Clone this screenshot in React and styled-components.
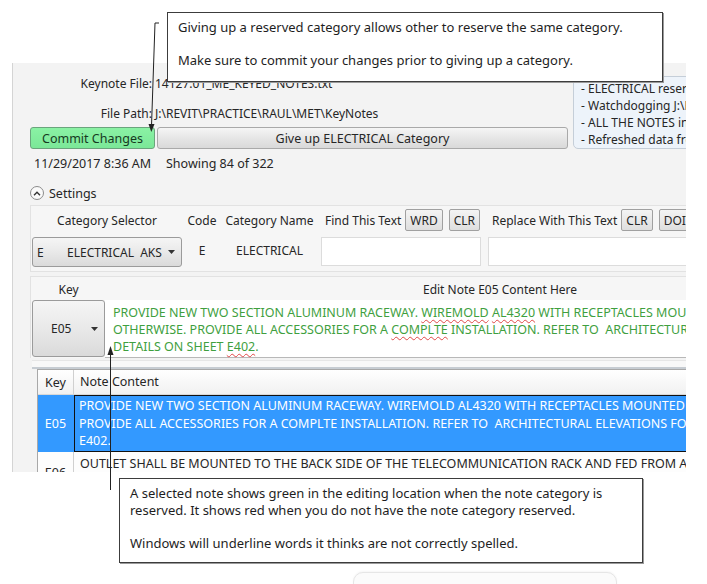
import React from 'react';
import styled, { createGlobalStyle } from 'styled-components';

const GlobalStyle = createGlobalStyle`
  html, body { margin: 0; padding: 0; background: #fff; }
  body { font-family: 'Noto Sans', 'Open Sans', sans-serif; }
`;

const Page = styled.div`
  position: relative;
  width: 707px;
  height: 584px;
  overflow: hidden;
  background: #fff;
  padding-top: 63px;
  box-sizing: border-box;
`;

const AppWindow = styled.div`
  margin-left: 12px;
  width: 674px;
  height: 409px;
  overflow: hidden;
  background: #f3f3f3;
  border-left: 1px solid #d4d4d4;
  box-sizing: border-box;
`;

const AppInner = styled.div`
  width: 900px;
  padding-left: 17px;
  font-size: 12px;
  color: #262626;
  box-sizing: border-box;
`;

const TopSection = styled.div`
  display: flex;
  align-items: flex-end;
  gap: 5px;
  padding-top: 9px;
`;

const LeftCol = styled.div`
  width: 538px;
  display: flex;
  flex-direction: column;
`;

const FieldRow = styled.div`
  display: flex;
  align-items: center;
  height: 22px;
  margin-bottom: ${(p) => (p.$tight ? 3 : 8)}px;
`;

const FieldLabel = styled.span`
  width: 122px;
  text-align: right;
`;

const FieldValue = styled.span`
  padding-left: 3px;
  white-space: nowrap;
`;

const ButtonRow = styled.div`
  display: flex;
  gap: 2px;
  height: 22px;
`;

const WideButton = styled.div`
  width: ${(p) => p.$width}px;
  height: 22px;
  box-sizing: border-box;
  display: flex;
  align-items: center;
  justify-content: center;
  border-radius: 3px;
  border: 1px solid ${(p) => (p.$commit ? '#6aa57c' : '#a9a9a9')};
  background: ${(p) =>
    p.$commit
      ? 'linear-gradient(#8af2a4, #7be898)'
      : 'linear-gradient(#f5f5f5, #e6e6e6 50%, #d9d9d9)'};
  color: ${(p) => (p.$commit ? '#163a1f' : '#262626')};
  font-size: 12.5px;
`;

const InfoBox = styled.div`
  width: 160px;
  height: 73px;
  box-sizing: border-box;
  padding: 3px 7px;
  background: #edf3fa;
  border: 1px solid #c5ced8;
  border-radius: 5px;
  line-height: 17px;
  white-space: nowrap;
  overflow: hidden;
`;

const StatusRow = styled.div`
  display: flex;
  align-items: center;
  height: 20px;
  margin-top: 4px;
  padding-left: 4px;
  font-size: 12.5px;
`;

const StatusTime = styled.span`
  width: 132px;
`;

const SettingsToggle = styled.div`
  display: flex;
  align-items: center;
  gap: 5px;
  height: 18px;
  margin-top: 11px;
  font-size: 12.5px;
`;

const ToggleCircle = styled.span`
  width: 14px;
  height: 14px;
  box-sizing: border-box;
  border-radius: 50%;
  border: 1px solid #8c8c8c;
  background: #fafafa;
  display: flex;
  align-items: center;
  justify-content: center;
`;

const SettingsPanel = styled.div`
  margin-top: 3px;
  border: 1px solid #e2e2e2;
  border-right: none;
  background: #f6f6f6;
  padding: 3px 0 4px 1px;
  display: grid;
  grid-template-columns: 150px 32px 95px 163px 300px;
  grid-template-rows: 22px 30px;
  column-gap: 4px;
  row-gap: 6px;
`;

const HeadCell = styled.div`
  display: flex;
  align-items: center;
  justify-content: ${(p) => (p.$start ? 'flex-start' : 'center')};
  gap: 4px;
  padding-left: ${(p) => p.$indent || 0}px;
  white-space: nowrap;
`;

const SmallButton = styled.span`
  height: 22px;
  box-sizing: border-box;
  padding: 0 4px;
  display: flex;
  align-items: center;
  border: 1px solid #a0a0a0;
  border-radius: 2px;
  background: linear-gradient(#f4f4f4, #dedede);
  margin-left: ${(p) => p.$push || 0}px;
`;

const ComboBox = styled.div`
  display: flex;
  align-items: center;
  box-sizing: border-box;
  height: ${(p) => p.$height || 30}px;
  border: 1px solid #9b9b9b;
  border-radius: 3px;
  background: linear-gradient(#f5f5f5, #e9e9e9 50%, #dadada);
  padding: ${(p) => p.$pad || '0 6px 0 4px'};
`;

const ComboCode = styled.span`
  width: 30px;
`;

const ComboText = styled.span`
  flex: 1;
  white-space: pre;
`;

const ValueCell = styled.div`
  display: flex;
  align-items: center;
  justify-content: center;
  padding-bottom: 3px;
`;

const TextInput = styled.div`
  height: 29px;
  width: ${(p) => p.$width}px;
  box-sizing: border-box;
  background: #fff;
  border: 1px solid #dcdcdc;
`;

const EditSection = styled.div`
  margin-top: 4px;
  border: 1px solid #e2e2e2;
  border-right: none;
  border-bottom: none;
  background: #f6f6f6;
  padding: 3px 0 0 1px;
  display: grid;
  grid-template-columns: 73px 790px;
  grid-template-rows: 18px 58px;
  row-gap: 2px;
`;

const EditorBox = styled.div`
  background: #fff;
  color: #3f9f3f;
  padding: 4px 8px;
  line-height: 17px;
  font-size: 12.5px;
  border-bottom: 1px solid #b8b8b8;
  box-sizing: border-box;
  white-space: pre;
`;

const Misspelled = styled.span`
  text-decoration: underline wavy #e04848;
  text-decoration-thickness: 1px;
  text-underline-offset: 2px;
`;

const Divider = styled.div`
  height: 6px;
  margin-left: 2px;
  border-top: 1px solid #e6e6e6;
  border-bottom: 2px solid #c6ccd2;
  margin-top: 2px;
  background: #f8f8f8;
`;

const Table = styled.div`
  margin-left: 7px;
  border: 1px solid #a8a8a8;
  background: #fdfdfd;
  font-size: 12.5px;
`;

const TableRow = styled.div`
  display: grid;
  grid-template-columns: 36px 1fr;
  height: ${(p) => p.$height}px;
  background: ${(p) => (p.$selected ? '#3399ff' : p.$header ? 'linear-gradient(#ffffff, #f1f1f1)' : 'transparent')};
  color: ${(p) => (p.$selected ? '#fff' : '#262626')};
  border-bottom: 1px solid ${(p) => (p.$header ? '#d8d8d8' : 'transparent')};
`;

const KeyCell = styled.div`
  display: flex;
  align-items: center;
  justify-content: center;
  padding-top: ${(p) => p.$pt || 0}px;
  border-right: 1px solid ${(p) => (p.$selected ? '#3399ff' : '#d0d0d0')};
  overflow: hidden;
`;

const NoteCell = styled.div`
  padding: ${(p) => p.$pad || '2px 5px'};
  line-height: 17.5px;
  white-space: pre;
  box-sizing: border-box;
  border: 1px solid ${(p) => (p.$focused ? '#111' : 'transparent')};
  display: ${(p) => (p.$header ? 'flex' : 'block')};
  align-items: center;
`;

const FigureEdge = styled.div`
  margin: 100px 0 0 353px;
  width: 262px;
  height: 30px;
  border: 1px solid #e6e6e6;
  border-radius: 10px;
  background: #fbfbfb;
  box-shadow: 0 -1px 2px rgba(0, 0, 0, 0.04);
`;

const Callout = styled.div`
  position: absolute;
  top: ${(p) => p.$top}px;
  left: ${(p) => p.$left}px;
  width: ${(p) => p.$width}px;
  box-sizing: border-box;
  padding: 6px 10px ${(p) => p.$pb}px;
  background: #fff;
  border: 1px solid #3c3c3c;
  box-shadow: 1px 1px 0 #9a9a9a;
  font-size: 13px;
  line-height: 16.5px;
  color: #1e1e1e;
  white-space: nowrap;
`;

const Leaders = styled.svg`
  position: absolute;
  top: 0;
  left: 0;
  pointer-events: none;
`;

const Caret = ({ color = '#333' }) => (
  <svg width="7" height="4" viewBox="0 0 7 4">
    <path d="M0 0 L7 0 L3.5 4 Z" fill={color} />
  </svg>
);

export default function App() {
  return (
    <>
      <GlobalStyle />
      <Page>
        <AppWindow>
          <AppInner>
            <TopSection>
              <LeftCol>
                <FieldRow>
                  <FieldLabel>Keynote File:</FieldLabel>
                  <FieldValue>14127.01_ME_KEYED_NOTES.txt</FieldValue>
                </FieldRow>
                <FieldRow $tight>
                  <FieldLabel>File Path:</FieldLabel>
                  <FieldValue>J:\REVIT\PRACTICE\RAUL\MET\KeyNotes</FieldValue>
                </FieldRow>
                <ButtonRow>
                  <WideButton $commit $width={125}>Commit Changes</WideButton>
                  <WideButton $width={411}>Give up ELECTRICAL Category</WideButton>
                </ButtonRow>
              </LeftCol>
              <InfoBox>
                <div>- ELECTRICAL reserved</div>
                <div>- Watchdogging J:\REVIT</div>
                <div>- ALL THE NOTES in</div>
                <div>- Refreshed data from</div>
              </InfoBox>
            </TopSection>

            <StatusRow>
              <StatusTime>11/29/2017 8:36 AM</StatusTime>
              <span>Showing 84 of 322</span>
            </StatusRow>

            <SettingsToggle>
              <ToggleCircle>
                <svg width="8" height="5" viewBox="0 0 8 5">
                  <path d="M1 4.2 L4 1.2 L7 4.2" fill="none" stroke="#333" strokeWidth="1.4" />
                </svg>
              </ToggleCircle>
              <span>Settings</span>
            </SettingsToggle>

            <SettingsPanel>
              <HeadCell>Category Selector</HeadCell>
              <HeadCell>Code</HeadCell>
              <HeadCell>Category Name</HeadCell>
              <HeadCell $start $indent={4}>
                Find This Text
                <SmallButton>WRD</SmallButton>
                <SmallButton $push={2}>CLR</SmallButton>
              </HeadCell>
              <HeadCell $start $indent={4}>
                Replace With This Text
                <SmallButton>CLR</SmallButton>
                <SmallButton $push={2}>DOIT</SmallButton>
              </HeadCell>

              <ComboBox>
                <ComboCode>E</ComboCode>
                <ComboText>{'ELECTRICAL  AKS'}</ComboText>
                <Caret />
              </ComboBox>
              <ValueCell>E</ValueCell>
              <ValueCell>ELECTRICAL</ValueCell>
              <TextInput $width={160} />
              <TextInput $width={300} />
            </SettingsPanel>

            <EditSection>
              <HeadCell>Key</HeadCell>
              <HeadCell>Edit Note E05 Content Here</HeadCell>
              <ComboBox $height={57} $pad="0 6px 0 18px">
                <ComboText>E05</ComboText>
                <Caret />
              </ComboBox>
              <EditorBox>
                <div>
                  PROVIDE NEW TWO SECTION ALUMINUM RACEWAY. <Misspelled>WIREMOLD</Misspelled>{' '}
                  <Misspelled>AL4320</Misspelled> WITH RECEPTACLES MOUNTED AS SHOWN UNLESS NOTED
                </div>
                <div>
                  OTHERWISE. PROVIDE ALL ACCESSORIES FOR A <Misspelled>COMPLTE</Misspelled> INSTALLATION. REFER TO{'  '}ARCHITECTURAL ELEVATIONS AND
                </div>
                <div>
                  DETAILS ON SHEET <Misspelled>E402</Misspelled>.
                </div>
              </EditorBox>
            </EditSection>
            <Divider />

            <Table>
              <TableRow $header $height={24}>
                <KeyCell>Key</KeyCell>
                <NoteCell $header $pad="0 5px">Note Content</NoteCell>
              </TableRow>
              <TableRow $selected $height={56}>
                <KeyCell $selected>E05</KeyCell>
                <NoteCell $focused $pad="1px 4px">
                  <div>PROVIDE NEW TWO SECTION ALUMINUM RACEWAY. WIREMOLD AL4320 WITH RECEPTACLES MOUNTED AS SHOWN UNLESS NOTED OTHERWISE.</div>
                  <div>PROVIDE ALL ACCESSORIES FOR A COMPLTE INSTALLATION. REFER TO{'  '}ARCHITECTURAL ELEVATIONS FOR DETAILS ON SHEET</div>
                  <div>E402.</div>
                </NoteCell>
              </TableRow>
              <TableRow $height={40}>
                <KeyCell>E06</KeyCell>
                <NoteCell $pad="2px 5px">
                  <div>OUTLET SHALL BE MOUNTED TO THE BACK SIDE OF THE TELECOMMUNICATION RACK AND FED FROM A DEDICATED CIRCUIT.</div>
                </NoteCell>
              </TableRow>
            </Table>
          </AppInner>
        </AppWindow>

        <FigureEdge />

        <Leaders width="707" height="584" viewBox="0 0 707 584">
          <path d="M159 23 H155 L151.5 126" fill="none" stroke="#222" strokeWidth="1" />
          <path d="M148.5 124 L151.3 132 L154.5 124 Z" fill="#222" />
          <path d="M110.5 490 V353" fill="none" stroke="#222" strokeWidth="1" />
          <path d="M107.5 355 L110.5 346 L113.5 355 Z" fill="#222" />
        </Leaders>

        <Callout $top={12} $left={167} $width={496} $pb={12}>
          <div>Giving up a reserved category allows other to reserve the same category.</div>
          <div>&nbsp;</div>
          <div>Make sure to commit your changes prior to giving up a category.</div>
        </Callout>

        <Callout $top={478} $left={119} $width={524} $pb={11}>
          <div>A selected note shows green in the editing location when the note category is</div>
          <div>reserved. It shows red when you do not have the note category reserved.</div>
          <div>&nbsp;</div>
          <div>Windows will underline words it thinks are not correctly spelled.</div>
        </Callout>
      </Page>
    </>
  );
}
